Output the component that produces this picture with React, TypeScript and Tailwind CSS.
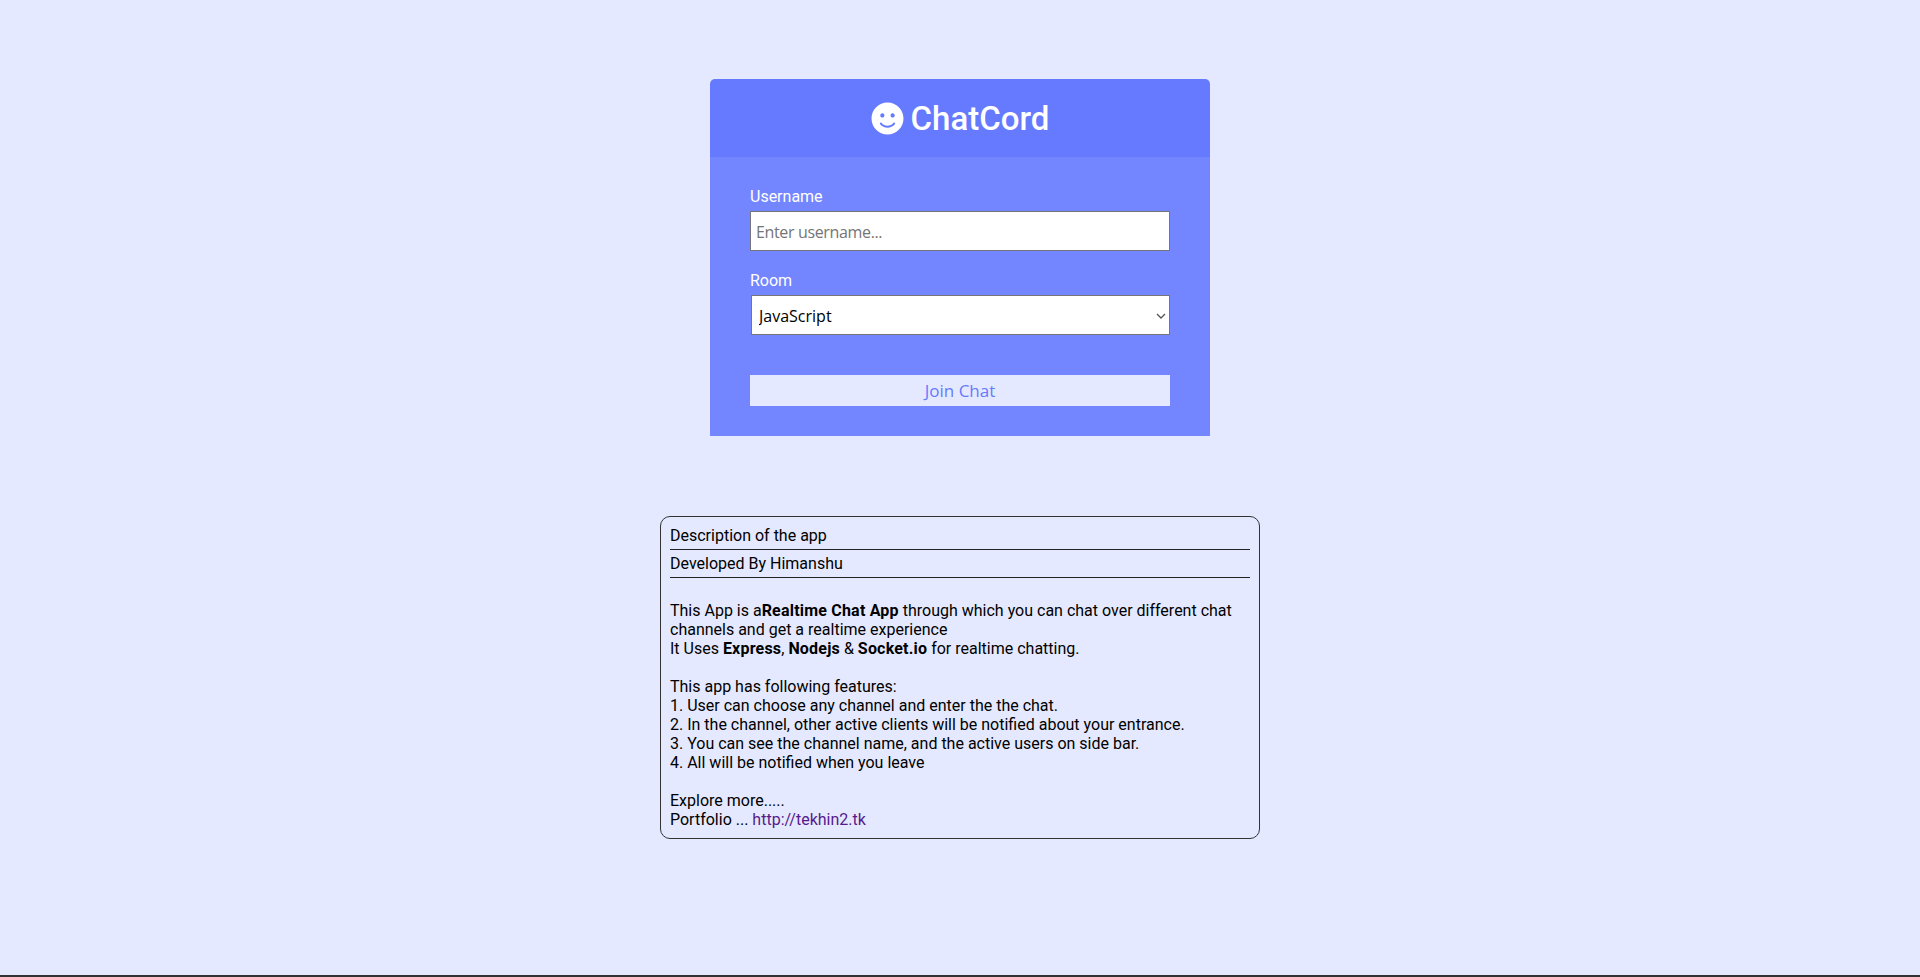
import { FaSmile } from 'react-icons/fa';

const ROOMS = ['JavaScript', 'Python', 'PHP', 'C#', 'Ruby', 'Java'];

export default function App() {
  return (
    <div className="flex h-[977px] flex-col overflow-hidden bg-[#e5e9ff] font-['Roboto',sans-serif] text-[16px] leading-[19px] text-black">
      <div className="flex-1 pt-[79px]">
        <div className="mx-auto w-[500px] text-white">
          <header className="flex h-[78px] items-center justify-center rounded-t-[5px] bg-[#667aff]">
            <h1 className="flex items-center text-[33px] leading-[37px] font-medium">
              <FaSmile className="mr-[7px] h-[33px] w-[33px]" />
              ChatCord
            </h1>
          </header>
          <main className="h-[279px] bg-[#7386ff] px-10 pt-[30px]">
            <form>
              <div className="mb-5">
                <label htmlFor="username" className="mb-[5px] block">
                  Username
                </label>
                <input
                  id="username"
                  type="text"
                  placeholder="Enter username..."
                  className="block h-10 w-full border border-[#767676] bg-white px-[5px] pt-px font-['Open_Sans',sans-serif] text-[16px] tracking-[-0.35px] text-black outline-none placeholder:text-[#757575]"
                />
              </div>
              <div className="mb-5">
                <label htmlFor="room" className="mb-[5px] block">
                  Room
                </label>
                <div className="relative ml-px">
                  <select
                    id="room"
                    className="block h-10 w-full appearance-none border border-[#767676] bg-white px-[7px] pt-[2px] font-['Open_Sans',sans-serif] text-[16px] text-black outline-none"
                  >
                    {ROOMS.map((room) => (
                      <option key={room}>{room}</option>
                    ))}
                  </select>
                  <svg
                    viewBox="0 0 10 6"
                    className="pointer-events-none absolute top-[18px] right-[4px] h-[6px] w-[10px] text-[#555]"
                    fill="none"
                    stroke="currentColor"
                    strokeWidth="1.3"
                  >
                    <path d="M1 1l4 4 4-4" />
                  </svg>
                </div>
              </div>
              <button
                type="submit"
                className="mt-10 block h-[31px] w-full bg-[#e5e9ff] font-['Open_Sans',sans-serif] text-[17px] text-[#667aff]"
              >
                Join Chat
              </button>
            </form>
          </main>
        </div>

        <section className="mx-auto mt-20 h-[323px] w-[600px] rounded-[10px] border border-[#333] px-[9px] pt-[9px]">
          <div className="border-b border-[#222] pb-[4px]">Description of the app</div>
          <div className="mt-[4px] border-b border-[#222] pb-[4px]">Developed By Himanshu</div>
          <p className="mt-[23px]">
            This App is a<b className="font-bold tracking-[0.2px]">Realtime Chat App</b> through which you can chat over different chat
            channels and get a realtime experience
            <br />
            It Uses <b className="font-bold tracking-[0.2px]">Express</b>, <b className="font-bold tracking-[0.2px]">Nodejs</b> &amp;{' '}
            <b className="font-bold tracking-[0.2px]">Socket.io</b> for realtime chatting.
            <br />
            <br />
            This app has following features:
            <br />
            1. User can choose any channel and enter the the chat.
            <br />
            2. In the channel, other active clients will be notified about your entrance.
            <br />
            3. You can see the channel name, and the active users on side bar.
            <br />
            4. All will be notified when you leave
            <br />
            <br />
            Explore more.....
            <br />
            Portfolio ... <a href="#" className="text-[#551a8b]">http://tekhin2.tk</a>
          </p>
        </section>
      </div>
      <div className="h-[2px] shrink-0 bg-[#333]" />
    </div>
  );
}
